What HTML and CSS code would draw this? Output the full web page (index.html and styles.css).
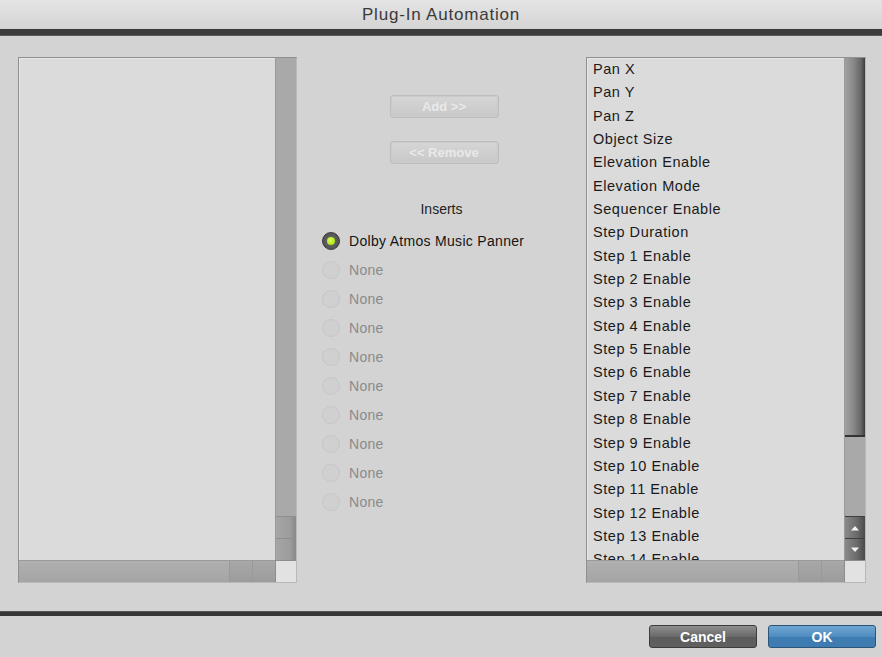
FILE: index.html
```html
<!DOCTYPE html>
<html>
<head>
<meta charset="utf-8">
<link rel="stylesheet" href="styles.css">
</head>
<body>
<div class="window">
  <div class="titlebar">Plug-In Automation</div>
  <div class="band"></div>
  <div class="main">
    <div class="listbox">
      <div class="list-area"></div>
      <div class="vscroll">
        <div class="track"></div>
        <div class="arrow plain"></div>
        <div class="arrow plain"></div>
      </div>
      <div class="hscroll">
        <div class="htrack"></div>
        <div class="hseg"></div>
        <div class="hseg"></div>
      </div>
      <div class="corner"></div>
    </div>

    <div class="middle">
      <button class="btn-disabled">Add &gt;&gt;</button>
      <button class="btn-disabled">&lt;&lt; Remove</button>
      <div class="inserts-label">Inserts</div>
      <div class="radios">
        <div class="radio-row selected"><span class="radio"><span class="dot"></span></span><span class="rlabel">Dolby Atmos Music Panner</span></div>
        <div class="radio-row"><span class="radio"></span><span class="rlabel">None</span></div>
        <div class="radio-row"><span class="radio"></span><span class="rlabel">None</span></div>
        <div class="radio-row"><span class="radio"></span><span class="rlabel">None</span></div>
        <div class="radio-row"><span class="radio"></span><span class="rlabel">None</span></div>
        <div class="radio-row"><span class="radio"></span><span class="rlabel">None</span></div>
        <div class="radio-row"><span class="radio"></span><span class="rlabel">None</span></div>
        <div class="radio-row"><span class="radio"></span><span class="rlabel">None</span></div>
        <div class="radio-row"><span class="radio"></span><span class="rlabel">None</span></div>
        <div class="radio-row"><span class="radio"></span><span class="rlabel">None</span></div>
      </div>
    </div>

    <div class="listbox right">
      <div class="list-area">
        <div class="item">Pan X</div>
        <div class="item">Pan Y</div>
        <div class="item">Pan Z</div>
        <div class="item">Object Size</div>
        <div class="item">Elevation Enable</div>
        <div class="item">Elevation Mode</div>
        <div class="item">Sequencer Enable</div>
        <div class="item">Step Duration</div>
        <div class="item">Step 1 Enable</div>
        <div class="item">Step 2 Enable</div>
        <div class="item">Step 3 Enable</div>
        <div class="item">Step 4 Enable</div>
        <div class="item">Step 5 Enable</div>
        <div class="item">Step 6 Enable</div>
        <div class="item">Step 7 Enable</div>
        <div class="item">Step 8 Enable</div>
        <div class="item">Step 9 Enable</div>
        <div class="item">Step 10 Enable</div>
        <div class="item">Step 11 Enable</div>
        <div class="item">Step 12 Enable</div>
        <div class="item">Step 13 Enable</div>
        <div class="item">Step 14 Enable</div>
      </div>
      <div class="vscroll">
        <div class="thumb"></div>
        <div class="track"></div>
        <div class="arrow dark"><svg width="10" height="6" viewBox="0 0 10 6"><path d="M1 5.5 L5 1 L9 5.5 Z" fill="#f2f2f2"/></svg></div>
        <div class="arrow dark"><svg width="10" height="6" viewBox="0 0 10 6"><path d="M1 0.5 L5 5 L9 0.5 Z" fill="#f2f2f2"/></svg></div>
      </div>
      <div class="hscroll">
        <div class="htrack"></div>
        <div class="hseg"></div>
        <div class="hseg"></div>
      </div>
      <div class="corner"></div>
    </div>
  </div>
  <div class="band bottom"></div>
  <div class="footer">
    <button class="btn cancel">Cancel</button>
    <button class="btn ok">OK</button>
  </div>
</div>
</body>
</html>
```

FILE: styles.css
```css
html, body {
  margin: 0;
  padding: 0;
  background: #d3d3d3;
}
body {
  font-family: "Liberation Sans", Arial, Helvetica, sans-serif;
  color: #1e1e1e;
}
.window {
  width: 882px;
  height: 657px;
  display: flex;
  flex-direction: column;
  overflow: hidden;
  background: #d3d3d3;
}
.titlebar {
  height: 29px;
  line-height: 30px;
  text-align: center;
  font-size: 17px;
  color: #3a3a3a;
  background: linear-gradient(#e4e4e4, #d4d4d4);
  letter-spacing: 0.8px;
}
.band {
  height: 7px;
  background: #3b3b3b;
  border-bottom: 1px solid #5a5a5a;
  box-sizing: border-box;
}
.band.bottom {
  height: 5px;
  border-bottom: none;
  border-top: 1px solid #555;
  background: #363636;
}
.main {
  height: 575px;
  box-sizing: border-box;
  padding: 21px 0 0 18px;
  display: flex;
}
.listbox {
  width: 279px;
  height: 526px;
  box-sizing: border-box;
  border: 1px solid #8f8f8f;
  border-right-color: #b8b8b8;
  border-bottom-color: #b8b8b8;
  display: grid;
  grid-template-columns: 1fr 21px;
  grid-template-rows: 1fr 22px;
  background: #dbdbdb;
}
.listbox.right {
  width: 280px;
}
.list-area {
  overflow: hidden;
  padding-left: 6px;
  background: #dbdbdb;
  box-shadow: inset 1px 1px 0 #e6e6e6;
}
.item {
  height: 23.35px;
  line-height: 23.35px;
  font-size: 14.5px;
  letter-spacing: 0.55px;
  color: #1a1a1a;
  white-space: nowrap;
}
.vscroll {
  display: flex;
  flex-direction: column;
  background: #a9a9a9;
  border-left: 1px solid #9a9a9a;
}
.track {
  flex: 1;
  background: #a9a9a9;
}
.thumb {
  height: 377px;
  background: linear-gradient(to right, #a0a0a0, #8a8a8a 40%, #666 80%, #3c3c3c);
  border-bottom: 2px solid #333;
}
.arrow {
  height: 22px;
  box-sizing: border-box;
  border-top: 1px solid #8e8e8e;
  display: flex;
  align-items: center;
  justify-content: center;
}
.arrow.plain {
  background: linear-gradient(to right, #a6a6a6, #9c9c9c 70%, #888);
}
.arrow.dark {
  background: linear-gradient(to right, #8a8a8a, #6a6a6a 60%, #4a4a4a);
  border-top: 1px solid #3e3e3e;
}
.hscroll {
  display: flex;
  background: #a8a8a8;
  border-top: 1px solid #9a9a9a;
}
.htrack {
  flex: 1;
  background: linear-gradient(#b0b0b0, #a4a4a4);
}
.hseg {
  width: 22px;
  border-left: 1px solid #999;
  background: linear-gradient(#a8a8a8, #9c9c9c);
}
.corner {
  background: #e2e2e2;
  border-left: 1px solid #8c8c8c;
  border-top: 1px solid #8c8c8c;
}
.middle {
  width: 289px;
  display: flex;
  flex-direction: column;
  align-items: center;
  padding-top: 38px;
  box-sizing: border-box;
}
.btn-disabled {
  width: 109px;
  height: 23px;
  margin-left: 5px;
  border: 1px solid #bdbdbd;
  border-radius: 3px;
  background: linear-gradient(#d6d6d6, #c8c8c8);
  box-shadow: inset 0 0 0 1px #cbcbcb;
  color: #e9e9e9;
  font-family: "Liberation Sans", Arial, sans-serif;
  font-weight: bold;
  font-size: 13px;
  padding: 0;
  margin-bottom: 23px;
}
.inserts-label {
  margin-top: 10px;
  font-size: 14px;
  color: #1e1e1e;
  height: 24px;
  line-height: 24px;
}
.radios {
  align-self: stretch;
  padding-left: 25px;
  margin-top: 5px;
}
.radio-row {
  height: 29px;
  display: flex;
  align-items: center;
}
.radio {
  width: 18px;
  height: 18px;
  box-sizing: border-box;
  border-radius: 50%;
  border: 1px solid #c6c6c6;
  background: #d0d0d0;
  display: flex;
  align-items: center;
  justify-content: center;
  margin-right: 9px;
}
.selected .radio {
  border: 1px solid #3a3a3a;
  background: radial-gradient(circle, #5e5e5e 40%, #484848 100%);
}
.dot {
  width: 8px;
  height: 8px;
  border-radius: 50%;
  background: radial-gradient(circle at 40% 40%, #d8ff4a, #9ed40e);
}
.rlabel {
  font-size: 14px;
  letter-spacing: 0.3px;
  color: #8a8a8a;
}
.selected .rlabel {
  color: #141414;
}
.footer {
  flex: 1;
  display: flex;
  justify-content: flex-end;
  align-items: flex-start;
  padding: 9px 6px 0 0;
  gap: 11px;
}
.btn {
  width: 108px;
  height: 23px;
  border-radius: 3px;
  font-family: "Liberation Sans", Arial, sans-serif;
  font-weight: bold;
  font-size: 14px;
  color: #ffffff;
  padding: 0;
}
.cancel {
  border: 1px solid #3c3c3c;
  background: linear-gradient(#8e8e8e, #6a6a6a 50%, #5c5c5c 51%, #606060);
}
.ok {
  border: 1px solid #2a5578;
  background: linear-gradient(#6fa7d3, #4f8cc0 50%, #3d7cb2 51%, #3e7bb0);
}
```
